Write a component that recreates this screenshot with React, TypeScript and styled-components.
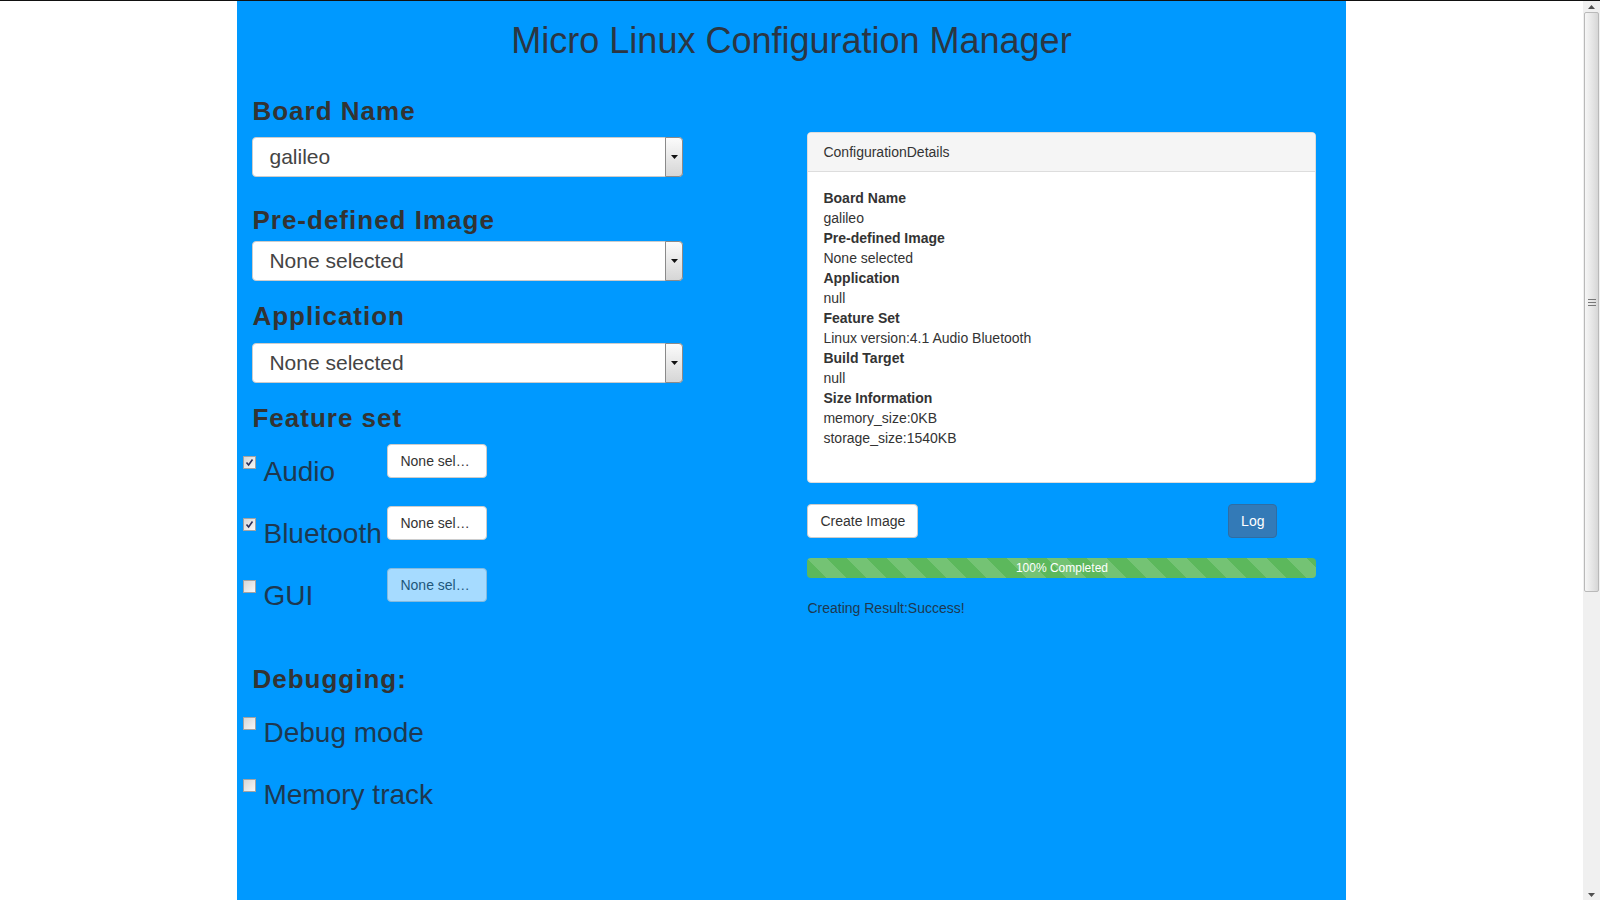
import styled, { createGlobalStyle } from "styled-components"

const GlobalStyle = createGlobalStyle`
  html, body { overflow: hidden; }
  body {
    margin: 0;
    border-top: 1px solid #111;
    background: #fff;
    font-family: "Liberation Sans", Arial, sans-serif;
    font-size: 14px;
    line-height: 20px;
    color: #333;
  }
`

const Shell = styled.div`
  display: flex;
  align-items: flex-start;
`

const Main = styled.div`
  flex: 1;
  min-width: 0;
`

/* window scrollbar, as in the screenshot */
const ScrollBar = styled.div`
  width: 17px;
  height: calc(100vh - 1px);
  flex-shrink: 0;
  display: flex;
  flex-direction: column;
  align-items: center;
  background: #f0f0f0;
`

const ScrollButton = styled.div`
  height: 11px;
  width: 100%;
  display: flex;
  align-items: center;
  justify-content: center;
`

const ScrollThumb = styled.div`
  width: 15px;
  height: 580px;
  box-sizing: border-box;
  display: flex;
  align-items: center;
  justify-content: center;
  border: 1px solid #b9b9b9;
  border-radius: 2px;
  background: linear-gradient(to right, #f6f6f6, #e4e4e4 60%, #d6d6d6);
`

const Page = styled.div`
  width: 70%;
  min-height: calc(100vh - 1px);
  margin: 0 auto;
  padding: 20px 15px 0;
  box-sizing: border-box;
  background: #0099ff;
`

const Title = styled.h1`
  margin: 0;
  font-size: 36px;
  font-weight: normal;
  line-height: 1.1;
  text-align: center;
  color: #2b3643;
`

const Columns = styled.div`
  display: grid;
  grid-template-columns: 540px 509px;
  column-gap: 15px;
  align-items: start;
`

const Column = styled.div`
  display: flex;
  flex-direction: column;
  align-items: flex-start;
`

const Heading = styled.h3<{ $mt: number }>`
  margin: ${p => p.$mt}px 0 0;
  font-size: 26px;
  font-weight: bold;
  letter-spacing: 1px;
  line-height: 26.4px;
  color: #333;
`

const SelectBox = styled.div<{ $mt: number }>`
  margin-top: ${p => p.$mt}px;
  width: 431px;
  height: 40px;
  box-sizing: border-box;
  display: flex;
  background: #fff;
  border: 1px solid #ccc;
  border-radius: 4px;
`

const SelectValue = styled.span`
  flex: 1;
  display: flex;
  align-items: center;
  padding-left: 16px;
  font-size: 21px;
  color: #444;
`

const SelectArrow = styled.span`
  width: 16px;
  margin: -1px -1px -1px 0;
  display: flex;
  align-items: center;
  justify-content: center;
  border: 1px solid #8a8a8a;
  border-radius: 0 4px 4px 0;
  background: linear-gradient(#fbfbfb, #d6d6d6);
`

const FeatureList = styled.div`
  margin-top: 12.6px;
  display: flex;
  flex-direction: column;
  gap: 18px;
`

const FeatureRow = styled.div`
  display: flex;
  align-items: flex-start;
  height: 44px;
`

const CheckLabel = styled.label<{ $mt?: number; $width?: number }>`
  display: flex;
  align-items: flex-start;
  gap: 7px;
  margin: ${p => p.$mt ?? 0}px 0 0 -9px;
  width: ${p => (p.$width ? `${p.$width}px` : "auto")};
  font-size: 28px;
  line-height: 32px;
  color: #1e3850;
`

const CheckBox = styled.span`
  width: 13px;
  height: 13px;
  box-sizing: border-box;
  display: flex;
  align-items: center;
  justify-content: center;
  border: 1px solid #a3a3a3;
  background: linear-gradient(135deg, #d6d6d6, #f7f7f7);
`

const DebugList = styled.div`
  margin-top: 24.6px;
  display: flex;
  flex-direction: column;
  gap: 30px;
`

const Button = styled.button<{ $primary?: boolean; $width?: number }>`
  height: 34px;
  width: ${p => (p.$width ? `${p.$width}px` : "auto")};
  padding: 6px 12px;
  box-sizing: border-box;
  font-family: inherit;
  font-size: 14px;
  line-height: 20px;
  text-align: left;
  white-space: nowrap;
  border-radius: 4px;
  border: 1px solid ${p => (p.$primary ? "#2e6da4" : "#ccc")};
  background: ${p => (p.$primary ? "#337ab7" : "#fff")};
  color: ${p => (p.$primary ? "#fff" : "#333")};
  &:disabled {
    opacity: 0.65;
  }
`

const Panel = styled.div`
  margin-top: 71.4px;
  width: 509px;
  box-sizing: border-box;
  background: #fff;
  border: 1px solid #ddd;
  border-radius: 4px;
`

const PanelHeading = styled.div`
  padding: 9px 15px;
  background: #f5f5f5;
  border-bottom: 1px solid #ddd;
  border-radius: 3px 3px 0 0;
`

const PanelBody = styled.div`
  padding: 16px 15px 34px;
`

const Line = styled.div<{ $bold?: boolean }>`
  font-weight: ${p => (p.$bold ? "bold" : "normal")};
`

const Toolbar = styled.div`
  margin-top: 21px;
  width: 470px;
  display: flex;
  justify-content: space-between;
`

const Progress = styled.div`
  margin-top: 20px;
  width: 509px;
  height: 20px;
  overflow: hidden;
  border-radius: 4px;
  background: #f5f5f5;
`

const ProgressBar = styled.div`
  height: 100%;
  font-size: 12px;
  line-height: 20px;
  text-align: center;
  color: #fff;
  background-color: #5cb85c;
  background-image: linear-gradient(
    45deg,
    rgba(255, 255, 255, 0.15) 25%,
    transparent 25%,
    transparent 50%,
    rgba(255, 255, 255, 0.15) 50%,
    rgba(255, 255, 255, 0.15) 75%,
    transparent 75%,
    transparent
  );
  background-size: 40px 40px;
`

const Result = styled.div`
  margin-top: 20px;
  color: #1e3850;
`

const features = [
  { name: "Audio", checked: true, disabled: false },
  { name: "Bluetooth", checked: true, disabled: false },
  { name: "GUI", checked: false, disabled: true },
]

const details: [string, string[]][] = [
  ["Board Name", ["galileo"]],
  ["Pre-defined Image", ["None selected"]],
  ["Application", ["null"]],
  ["Feature Set", ["Linux version:4.1 Audio Bluetooth"]],
  ["Build Target", ["null"]],
  ["Size Information", ["memory_size:0KB", "storage_size:1540KB"]],
]

const Check = ({ checked }: { checked: boolean }) => (
  <CheckBox>
    {checked && (
      <svg width="9" height="9" viewBox="0 0 9 9">
        <path d="M1.5 4.5 3.6 7 7.5 1.5" fill="none" stroke="#2b2f5a" strokeWidth="1.6" />
      </svg>
    )}
  </CheckBox>
)

const Select = ({ value, mt }: { value: string; mt: number }) => (
  <SelectBox $mt={mt}>
    <SelectValue>{value}</SelectValue>
    <SelectArrow>
      <svg width="7" height="4" viewBox="0 0 7 4">
        <path d="M0 0h7L3.5 4z" fill="#111" />
      </svg>
    </SelectArrow>
  </SelectBox>
)

const WindowScrollBar = () => (
  <ScrollBar>
    <ScrollButton>
      <svg width="7" height="4" viewBox="0 0 7 4">
        <path d="M0 4h7L3.5 0z" fill="#505050" />
      </svg>
    </ScrollButton>
    <ScrollThumb>
      <svg width="8" height="7" viewBox="0 0 8 7">
        <path d="M0 .5h8M0 3.5h8M0 6.5h8" stroke="#777" />
      </svg>
    </ScrollThumb>
    <div style={{ flex: 1 }} />
    <ScrollButton>
      <svg width="7" height="4" viewBox="0 0 7 4">
        <path d="M0 0h7L3.5 4z" fill="#505050" />
      </svg>
    </ScrollButton>
  </ScrollBar>
)

export default function App() {
  return (
    <>
      <GlobalStyle />
      <Shell>
        <Main>
          <Page>
            <Title>Micro Linux Configuration Manager</Title>
            <Columns>
              <Column>
                <Heading $mt={37}>Board Name</Heading>
                <Select value="galileo" mt={13} />
                <Heading $mt={29.5}>Pre-defined Image</Heading>
                <Select value="None selected" mt={8} />
                <Heading $mt={22}>Application</Heading>
                <Select value="None selected" mt={13.6} />
                <Heading $mt={22}>Feature set</Heading>
                <FeatureList>
                  {features.map(f => (
                    <FeatureRow key={f.name}>
                      <CheckLabel $mt={12} $width={144}>
                        <Check checked={f.checked} />
                        {f.name}
                      </CheckLabel>
                      <Button $width={100} disabled={f.disabled}>
                        None sel…
                      </Button>
                    </FeatureRow>
                  ))}
                </FeatureList>
                <Heading $mt={54}>Debugging:</Heading>
                <DebugList>
                  <CheckLabel>
                    <Check checked={false} />
                    Debug mode
                  </CheckLabel>
                  <CheckLabel>
                    <Check checked={false} />
                    Memory track
                  </CheckLabel>
                </DebugList>
              </Column>
              <Column>
                <Panel>
                  <PanelHeading>ConfigurationDetails</PanelHeading>
                  <PanelBody>
                    {details.map(([label, values]) => (
                      <div key={label}>
                        <Line $bold>{label}</Line>
                        {values.map(v => (
                          <Line key={v}>{v}</Line>
                        ))}
                      </div>
                    ))}
                  </PanelBody>
                </Panel>
                <Toolbar>
                  <Button>Create Image</Button>
                  <Button $primary>Log</Button>
                </Toolbar>
                <Progress>
                  <ProgressBar>100% Completed</ProgressBar>
                </Progress>
                <Result>Creating Result:Success!</Result>
              </Column>
            </Columns>
          </Page>
        </Main>
        <WindowScrollBar />
      </Shell>
    </>
  )
}
